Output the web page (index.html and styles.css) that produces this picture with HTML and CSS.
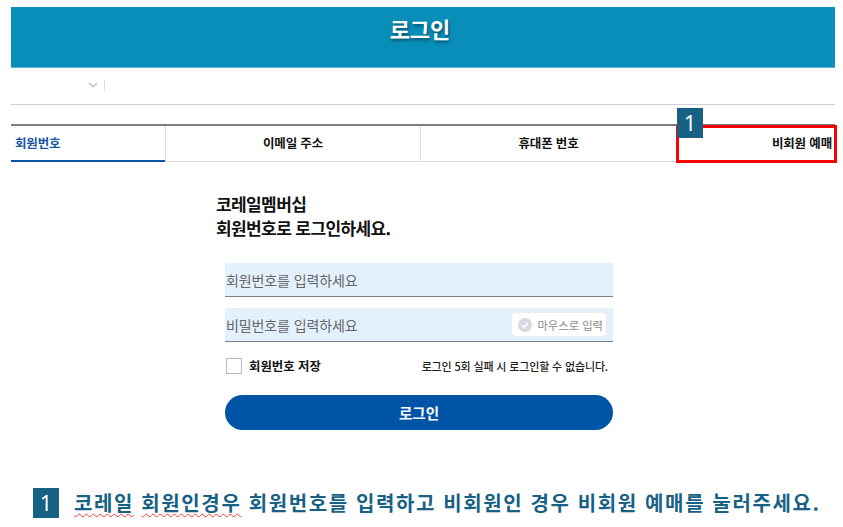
FILE: index.html
```html
<!DOCTYPE html>
<html lang="ko">
<head>
<meta charset="utf-8">
<title>로그인</title>
<link rel="stylesheet" href="styles.css">
</head>
<body>
<div class="page">
  <header class="banner"><h1>로그인</h1></header>
  <div class="filter">
    <svg class="chev" width="10" height="6" viewBox="0 0 10 6"><path d="M1 1l4 4 4-4" fill="none" stroke="#b4b6bc" stroke-width="1.2"/></svg>
    <span class="sep"></span>
  </div>
  <nav class="tabs">
    <a class="tab tab-first">회원번호</a>
    <a class="tab tab-mid">이메일 주소</a>
    <a class="tab tab-mid2">휴대폰 번호</a>
    <a class="tab tab-last">비회원 예매</a>
    <span class="redbox"></span>
    <span class="badge badge-tab">1</span>
  </nav>
  <main class="content">
    <h2 class="title">코레일멤버십<br>회원번호로 로그인하세요.</h2>
    <form class="form">
      <div class="field"><span>회원번호를 입력하세요</span></div>
      <div class="field field-pw">
        <span>비밀번호를 입력하세요</span>
        <span class="mouse">
          <svg width="14" height="14" viewBox="0 0 14 14"><circle cx="7" cy="7" r="7" fill="#d5d9e0"/><path d="M4 7.2l2.2 2.1L10 5.2" fill="none" stroke="#fff" stroke-width="1.4"/></svg>
          마우스로 입력
        </span>
      </div>
      <div class="opts">
        <label class="save"><i class="check"></i>회원번호 저장</label>
        <span class="warn">로그인 5회 실패 시 로그인할 수 없습니다.</span>
      </div>
      <div class="btn">로그인</div>
    </form>
  </main>
  <footer class="note">
    <span class="badge badge-note">1</span>
    <p><span class="wavy">코레일</span> <span class="wavy">회원인경우</span> 회원번호를 입력하고 비회원인 경우 비회원 예매를 눌러주세요.</p>
  </footer>
</div>
</body>
</html>
```
FILE: styles.css
```css
* { box-sizing: border-box; }
html, body { margin: 0; background: #fff; }
body { font-family: "Noto Sans CJK KR", "Noto Sans", sans-serif; color: #111; overflow: hidden; }
.page { width: 843px; height: 527px; padding: 7px 8px 0 11px; }
.banner { height: 61px; background: #088eb8; border-bottom: 1px solid #5fb4d2; display: flex; justify-content: center; padding: 5px 6px 0 0; }
.banner h1 { margin: 0; font-size: 22px; line-height: 32px; font-weight: 700; color: #fff; text-shadow: 1px 2px 3px rgba(0,0,0,.45); }
.filter { height: 37px; border-bottom: 1px solid #cfd0d6; display: flex; align-items: center; padding: 0 0 2px 77px; gap: 6px; }
.sep { width: 1px; height: 11px; background: #dcdcdc; }
.tabs { position: relative; margin-top: 19px; height: 38px; border-top: 2px solid #7f7f7f; border-bottom: 1px solid #dcdcdc; display: flex; font-size: 12.5px; letter-spacing: -0.15px; font-weight: 700; line-height: 33px; }
.tab { display: block; text-align: center; white-space: nowrap; }
.tab-first { width: 154px; margin-bottom: -1px; height: 36px; text-align: left; padding-left: 4px; color: #1757a5; border-bottom: 2px solid #0b55ac; }
.tab-mid, .tab-mid2 { width: 255px; border-left: 1px solid #dcdcdc; }
.tab-mid2 { width: 256px; }
.tab-last { flex: 1; text-align: right; padding-right: 3px; }
.redbox { position: absolute; left: 665px; top: -1px; width: 161px; height: 38px; border: 3px solid #fe0000; }
.badge { background: #176185; color: #fff; font-weight: 400; font-family: "Noto Sans", sans-serif; display: flex; align-items: center; justify-content: center; }
.badge-tab { position: absolute; left: 666px; top: -18px; width: 26px; height: 30px; font-size: 21px; }
.content { padding: 30px 0 0 205px; }
.title { margin: 0; font-size: 17px; line-height: 24px; font-weight: 700; letter-spacing: -0.6px; }
.form { margin: 23px 0 0 9px; width: 388px; }
.field { height: 34px; background: #e3f1fe; border-bottom: 1px solid #7f8285; padding-left: 1px; font-size: 14px; letter-spacing: -0.1px; line-height: 34px; color: #666; display: flex; justify-content: space-between; align-items: center; }
.field-pw { margin-top: 11px; padding-right: 6px; }
.mouse { width: 96px; height: 25px; background: #fff; border: 1px solid #ececec; border-radius: 5px; display: flex; align-items: center; justify-content: flex-end; padding-right: 3px; gap: 5px; font-size: 11.3px; letter-spacing: 0; color: #8a8a8a; }
.opts { display: flex; justify-content: space-between; align-items: center; margin-top: 16px; height: 16px; padding: 0 5px 0 1px; }
.save { display: flex; align-items: center; gap: 7px; font-size: 12.4px; font-weight: 700; }
.check { width: 16px; height: 16px; border: 1px solid #b9b9b9; background: #fff; }
.warn { font-size: 11px; letter-spacing: -0.15px; color: #222; font-weight: 500; }
.btn { margin-top: 21px; height: 35px; border-radius: 18px; background: #0054a6; color: #fff; text-align: center; font-size: 14.5px; font-weight: 700; line-height: 35px; }
.note { position: relative; margin: 58px 0 0 22px; display: flex; align-items: center; gap: 15px; }
.badge-note { width: 26px; height: 30px; font-size: 21px; flex: none; }
.note p { margin: 0; font-size: 20px; font-weight: 700; letter-spacing: 1.62px; color: #176185; white-space: nowrap; line-height: 30px; }
.wavy { text-decoration: underline wavy #f04040 1px; text-underline-offset: 2px; }
```
